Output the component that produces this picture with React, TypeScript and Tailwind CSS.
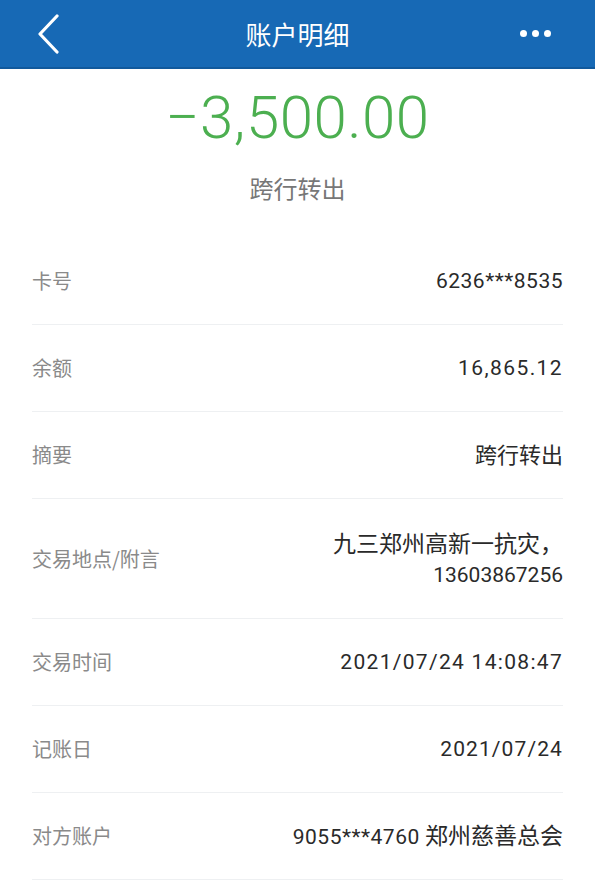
import React from "react";

const cjk = "'Noto Sans CJK SC', 'Noto Sans', sans-serif";
const num = "Roboto, 'Noto Sans CJK SC', sans-serif";

function Row({ label, children, tall }: { label: string; children: React.ReactNode; tall?: boolean }) {
  return (
    <div
      className={`flex items-center justify-between border-b border-[#eef0f2] ${tall ? "h-[120px]" : "h-[87px]"}`}
    >
      <div className="text-[20px] text-[#8a8a8a]" style={{ fontFamily: cjk }}>
        {label}
      </div>
      <div className="text-right text-[21px] leading-[33px] text-[#2a2a2a]" style={{ fontFamily: num }}>
        {children}
      </div>
    </div>
  );
}

export default function App() {
  return (
    <div className="min-h-[896px] w-[595px] bg-white">
      <div className="relative flex h-[69px] items-center justify-center border-b-2 border-[#11599c] bg-[#1769b5]">
        <svg className="absolute left-[36px] top-[14px]" width="26" height="40" viewBox="0 0 26 40">
          <path d="M21 2 L4 20 L21 38" fill="none" stroke="white" strokeWidth="3.2" strokeLinecap="round" strokeLinejoin="round" />
        </svg>
        <div className="text-[26px] text-white" style={{ fontFamily: cjk }}>
          账户明细
        </div>
        <div className="absolute right-[44px] top-[30px] flex gap-[5px]">
          <div className="h-[7px] w-[7px] rounded-full bg-white" />
          <div className="h-[7px] w-[7px] rounded-full bg-white" />
          <div className="h-[7px] w-[7px] rounded-full bg-white" />
        </div>
      </div>
      <div className="flex flex-col items-center">
        <div
          className="mt-[14px] text-[60px] font-light leading-[70px] tracking-[0.5px] text-[#4caf50]"
          style={{ fontFamily: num }}
        >
          −3,500.00
        </div>
        <div className="mt-[18px] text-[24px] leading-[34px] text-[#777777]" style={{ fontFamily: cjk }}>
          跨行转出
        </div>
      </div>
      <div className="mt-[33px] px-[32px]">
        <Row label="卡号">
          <span className="tracking-[0.5px]">6236***8535</span>
        </Row>
        <Row label="余额">
          <span className="tracking-[1.4px]">16,865.12</span>
        </Row>
        <Row label="摘要">
          <span className="text-[22px]" style={{ fontFamily: cjk }}>跨行转出</span>
        </Row>
        <Row label="交易地点/附言" tall>
          <div className="text-[23px]" style={{ fontFamily: cjk }}>九三郑州高新一抗灾，</div>
          <div>13603867256</div>
        </Row>
        <Row label="交易时间">
          <span className="tracking-[1.3px]">2021/07/24 14:08:47</span>
        </Row>
        <Row label="记账日">
          <span className="tracking-[1.1px]">2021/07/24</span>
        </Row>
        <Row label="对方账户">
          <span className="tracking-[0.5px]">9055***4760</span>{" "}
          <span className="text-[23px]" style={{ fontFamily: cjk }}>郑州慈善总会</span>
        </Row>
      </div>
    </div>
  );
}
